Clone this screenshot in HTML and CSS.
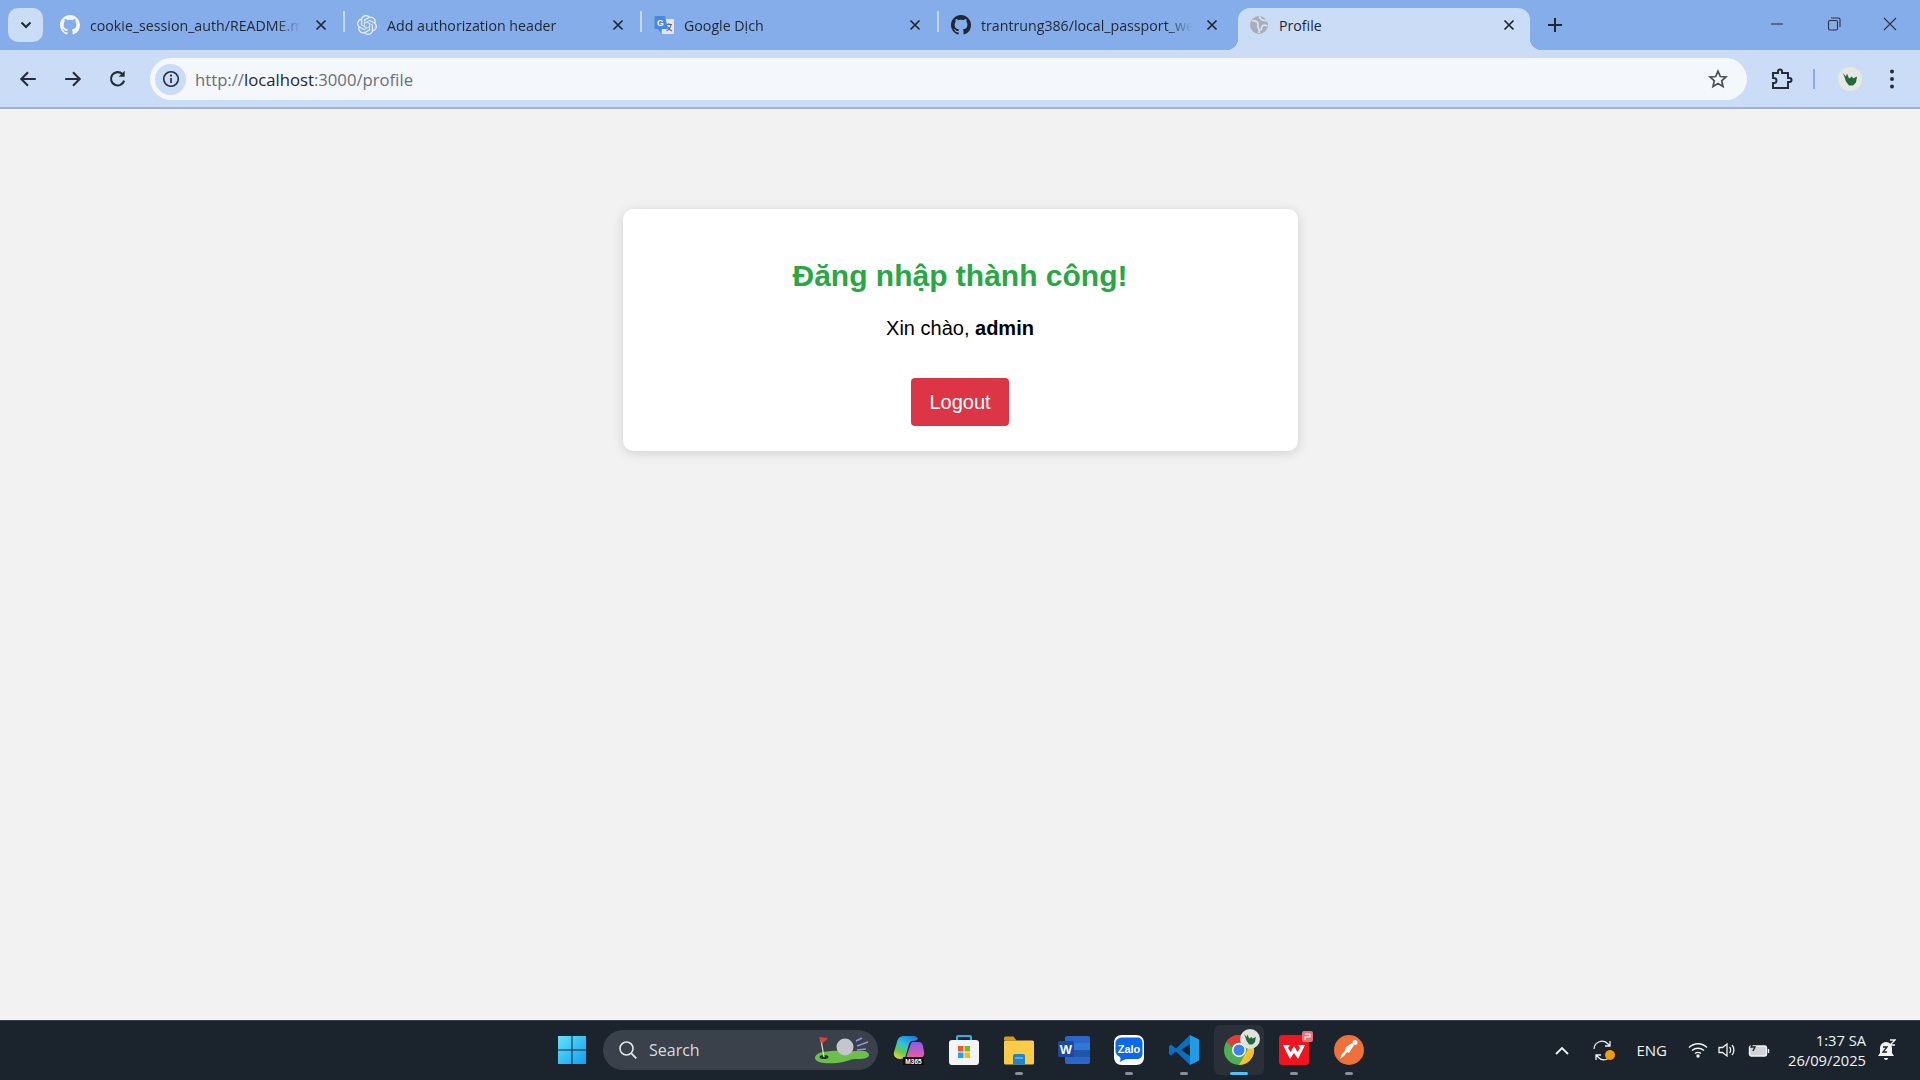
FILE: index.html
```html
<!DOCTYPE html>
<html lang="en">
<head>
    <meta charset="UTF-8">
    <title>Profile</title>
    <link rel="stylesheet" href="styles.css">
</head>
<body>
    <svg class="defs" width="0" height="0">
        <symbol id="github" viewBox="0 0 16 16">
            <path fill="currentColor" d="M8 0C3.58 0 0 3.58 0 8c0 3.54 2.29 6.53 5.47 7.59.4.07.55-.17.55-.38 0-.19-.01-.82-.01-1.49-2.01.37-2.53-.49-2.69-.94-.09-.23-.48-.94-.82-1.13-.28-.15-.68-.52-.01-.53.63-.01 1.08.58 1.23.82.72 1.21 1.87.87 2.33.66.07-.52.28-.87.51-1.07-1.78-.2-3.64-.89-3.64-3.95 0-.87.31-1.59.82-2.15-.08-.2-.36-1.02.08-2.12 0 0 .67-.21 2.2.82.64-.18 1.32-.27 2-.27.68 0 1.36.09 2 .27 1.53-1.04 2.2-.82 2.2-.82.44 1.1.16 1.92.08 2.12.51.56.82 1.27.82 2.15 0 3.07-1.87 3.75-3.65 3.95.29.25.54.73.54 1.48 0 1.07-.01 1.93-.01 2.2 0 .21.15.46.55.38A8.013 8.013 0 0016 8c0-4.42-3.58-8-8-8z"/>
        </symbol>
        <symbol id="x" viewBox="0 0 12 12">
            <path d="M1.500 1.500l9 9M10.500 1.500l-9 9" stroke="currentColor" stroke-width="1.700" fill="none"/>
        </symbol>
    </svg>

    <div class="tabstrip">
        <div class="tab-search">
            <svg width="12" height="8" viewBox="0 0 12 8"><path d="M1.500 1.500L6 6l4.500-4.500" stroke="#1f2733" stroke-width="2" fill="none"/></svg>
        </div>
        <div class="tab">
            <svg class="favicon github-light"><use href="#github"/></svg>
            <span class="tab-title">cookie_session_auth/README.m</span>
            <svg class="tab-x"><use href="#x"/></svg>
        </div>
        <div class="tab">
            <svg class="favicon" viewBox="0 0 24 24">
                <path fill="#e8eef9" d="M22.2819 9.8211a5.9847 5.9847 0 0 0-.5157-4.9108 6.0462 6.0462 0 0 0-6.5098-2.9A6.0651 6.0651 0 0 0 4.9807 4.1818a5.9847 5.9847 0 0 0-3.9977 2.9 6.0462 6.0462 0 0 0 .7427 7.0966 5.98 5.98 0 0 0 .511 4.9107 6.051 6.051 0 0 0 6.5146 2.9001A5.9847 5.9847 0 0 0 13.2599 24a6.0557 6.0557 0 0 0 5.7718-4.2058 5.9894 5.9894 0 0 0 3.9977-2.9001 6.0557 6.0557 0 0 0-.7475-7.0729zm-9.022 12.6081a4.4755 4.4755 0 0 1-2.8764-1.0408l.1419-.0804 4.7783-2.7582a.7948.7948 0 0 0 .3927-.6813v-6.7369l2.02 1.1686a.071.071 0 0 1 .038.052v5.5826a4.504 4.504 0 0 1-4.4945 4.4944zm-9.6607-4.1254a4.4708 4.4708 0 0 1-.5346-3.0137l.142.0852 4.783 2.7582a.7712.7712 0 0 0 .7806 0l5.8428-3.3685v2.3324a.0804.0804 0 0 1-.0332.0615L9.74 19.9502a4.4992 4.4992 0 0 1-6.1408-1.6464zM2.3408 7.8956a4.485 4.485 0 0 1 2.3655-1.9728V11.6a.7664.7664 0 0 0 .3879.6765l5.8144 3.3543-2.0201 1.1685a.0757.0757 0 0 1-.071 0l-4.8303-2.7865A4.504 4.504 0 0 1 2.3408 7.872zm16.5963 3.8558L13.1038 8.364 15.1192 7.2a.0757.0757 0 0 1 .071 0l4.8303 2.7913a4.4944 4.4944 0 0 1-.6765 8.1042v-5.6772a.79.79 0 0 0-.407-.667zm2.0107-3.0231l-.142-.0852-4.7735-2.7818a.7759.7759 0 0 0-.7854 0L9.409 9.2297V6.8974a.0662.0662 0 0 1 .0284-.0615l4.8303-2.7866a4.4992 4.4992 0 0 1 6.6802 4.66zM8.3065 12.863l-2.02-1.1638a.0804.0804 0 0 1-.038-.0567V6.0742a4.4992 4.4992 0 0 1 7.3757-3.4537l-.142.0805L8.704 5.459a.7948.7948 0 0 0-.3927.6813zm1.0976-2.3654l2.602-1.4998 2.6069 1.4998v2.9994l-2.5974 1.4997-2.6067-1.4997Z"/>
            </svg>
            <span class="tab-title">Add authorization header</span>
            <svg class="tab-x"><use href="#x"/></svg>
        </div>
        <div class="tab">
            <svg class="favicon" viewBox="0 0 20 20">
                <rect x="8" y="4" width="12" height="15" rx="1" fill="#e4e6e8"/>
                <path d="M11.500 9.500h6.500M14.800 8v1.500M12.500 16c2.500-1.500 4-3.500 4.500-6.500M13.500 11.500c1 2 2.500 3.500 4.500 4.500" stroke="#5f6873" stroke-width="1.100" fill="none"/>
                <path d="M1.500 1h9.500l3 13H7.500l-.5 4-3-4H1.500a1 1 0 0 1-1-1V2a1 1 0 0 1 1-1z" fill="#4a86e8"/>
                <text x="3" y="10.500" class="fav-g">G</text>
            </svg>
            <span class="tab-title">Google Dịch</span>
            <svg class="tab-x"><use href="#x"/></svg>
        </div>
        <div class="tab last">
            <svg class="favicon github-dark"><use href="#github"/></svg>
            <span class="tab-title">trantrung386/local_passport_we</span>
            <svg class="tab-x"><use href="#x"/></svg>
        </div>
        <div class="tab active">
            <svg class="favicon" viewBox="0 0 20 20">
                <circle cx="10" cy="10" r="9" fill="#a9afb8"/>
                <path d="M3 6c2-1 4 0 5.500 1.500C10 9 8 10.500 9 12c1 1.500 1.500 3.500 1 6M11 1.500c-.5 2 1 3 2.500 3.500s3.500 0 4.500 1M18 11c-2-1.500-4-1-5 .5-.5 1-1.500 2.500-.5 4" fill="none" stroke="#d5e2f6" stroke-width="1.800"/>
            </svg>
            <span class="tab-title plain">Profile</span>
            <svg class="tab-x"><use href="#x"/></svg>
        </div>
        <svg class="new-tab" width="14" height="14" viewBox="0 0 14 14"><path d="M7 0v14M0 7h14" stroke="#1f2733" stroke-width="2"/></svg>
        <div class="window-btns">
            <svg width="14" height="14" viewBox="0 0 14 14"><path d="M1 7h12" stroke="#2a3344" stroke-width="1.100"/></svg>
            <svg width="14" height="14" viewBox="0 0 14 14" fill="none" stroke="#2a3344" stroke-width="1.100"><rect x="1.500" y="3.500" width="9" height="9.500" rx="1.500"/><path d="M4 1h7.500A1.500 1.500 0 0 1 13 2.500V10"/></svg>
            <svg width="14" height="14" viewBox="0 0 14 14"><path d="M1 1l12 12M13 1L1 13" stroke="#2a3344" stroke-width="1.100"/></svg>
        </div>
    </div>

    <div class="toolbar">
        <svg class="nav-icon" viewBox="0 0 18 18"><path d="M16 9H3M9 3L3 9l6 6" fill="none" stroke="#252d3a" stroke-width="1.900"/></svg>
        <svg class="nav-icon" viewBox="0 0 18 18"><path d="M2 9h13M9 3l6 6-6 6" fill="none" stroke="#252d3a" stroke-width="1.900"/></svg>
        <svg class="nav-icon" viewBox="0 0 18 18"><path d="M14.500 10.500A6 6 0 1 1 13 4.600" fill="none" stroke="#252d3a" stroke-width="1.900"/><path d="M15 1.500V7H9.500z" fill="#252d3a"/></svg>
        <div class="omnibox">
            <span class="site-info">
                <svg width="18" height="18" viewBox="0 0 18 18"><circle cx="9" cy="9" r="7.300" fill="none" stroke="#252d3a" stroke-width="1.600"/><path d="M9 8v5" stroke="#252d3a" stroke-width="1.700"/><circle cx="9" cy="5.600" r="1.100" fill="#252d3a"/></svg>
            </span>
            <span class="url"><span class="dim">http://</span>localhost<span class="dim">:3000/profile</span></span>
            <svg class="star" width="20" height="20" viewBox="0 0 20 20"><path d="M10 2.200l2.300 5.300 5.700.5-4.300 3.800 1.300 5.600-5-3-5 3 1.300-5.600L2 8l5.700-.5z" fill="none" stroke="#4a515c" stroke-width="1.700"/></svg>
        </div>
        <svg class="ext-icon" width="24" height="24" viewBox="0 0 24 24"><path d="M4 6h5V4.500a2 2 0 0 1 4 0V6h6v5h1.500a2 2 0 0 1 0 4H19v6H4v-5h1a2.500 2.500 0 0 0 0-5H4z" fill="none" stroke="#252d3a" stroke-width="2"/></svg>
        <span class="tool-sep"></span>
        <span class="avatar">
            <svg width="24" height="24" viewBox="0 0 24 24"><circle cx="12" cy="12" r="12" fill="#e6e8e4"/><path d="M5 6l3 3.500 1-3 2 5 3-2 1 2 4-2-1 6-3 3-4 0-3-4z" fill="#22693c"/></svg>
        </span>
        <svg class="menu-icon" width="6" height="22" viewBox="0 0 6 22"><circle cx="3" cy="3.500" r="2" fill="#252d3a"/><circle cx="3" cy="11" r="2" fill="#252d3a"/><circle cx="3" cy="18.500" r="2" fill="#252d3a"/></svg>
    </div>

    <main class="page">
        <div class="card">
            <h2 class="card-title">Đăng nhập thành công!</h2>
            <p class="greeting">Xin chào, <strong>admin</strong></p>
            <button class="logout">Logout</button>
        </div>
    </main>

    <footer class="taskbar">
        <div class="task-apps">
            <div class="app">
                <svg width="30" height="30" viewBox="0 0 30 30">
                    <defs><linearGradient id="win" x1="0" y1="0" x2="1" y2="1"><stop offset="0" stop-color="#62e3fb"/><stop offset="1" stop-color="#0f9ff0"/></linearGradient></defs>
                    <path d="M1 1h13.500v13.500H1zM15.500 1H29v13.500H15.500zM1 15.500h13.500V29H1zM15.500 15.500H29V29H15.500z" fill="url(#win)"/>
                </svg>
            </div>
            <div class="search">
                <svg width="20" height="20" viewBox="0 0 20 20"><circle cx="8.500" cy="8.500" r="6.500" fill="none" stroke="#e4e7ea" stroke-width="1.600"/><path d="M13.300 13.300l5 5" stroke="#e4e7ea" stroke-width="1.800"/></svg>
                <span class="search-text">Search</span>
                <svg class="golf" width="56" height="28" viewBox="0 0 56 28">
                    <path d="M1 21c3-6 10-5 16-6 8-1 14 1 24 0 8-1 14 0 14 4s-8 4-14 4c-5 0-8 3-18 4C12 28 0 27 1 21z" fill="#6cc04a"/>
                    <ellipse cx="10" cy="21" rx="4.500" ry="2" fill="#1f3b2a"/>
                    <path d="M10 21L7 4" stroke="#e9e2d4" stroke-width="1.200"/>
                    <path d="M5 1l9 1-6 6z" fill="#ea3a3a"/>
                    <circle cx="31" cy="11" r="8.500" fill="#c3c6cd"/>
                    <path d="M42 5l6-3M43 10l11-4M43 14l9-1" stroke="#8f93e6" stroke-width="1.600"/>
                </svg>
            </div>
            <div class="app">
                <svg width="32" height="32" viewBox="0 0 32 32">
                    <defs>
                        <linearGradient id="m365a" x1="0.700" y1="0" x2="0.200" y2="1"><stop offset="0" stop-color="#1f7fe8"/><stop offset=".4" stop-color="#2fc4d8"/><stop offset=".7" stop-color="#63c94f"/><stop offset="1" stop-color="#e8d02f"/></linearGradient>
                        <linearGradient id="m365b" x1="0.500" y1="0" x2="0.500" y2="1"><stop offset="0" stop-color="#8a5be8"/><stop offset="1" stop-color="#f05aa6"/></linearGradient>
                    </defs>
                    <path d="M11 2h10c2 0 3 1 4 3l-3 2c-3-1-5 0-6 3l-3 11c-1 3-3 4-6 4-4 0-7-3-6-7L4 8c1-4 3-6 7-6z" fill="url(#m365a)"/>
                    <path d="M20 8h6c2 0 3 1 4 4l1 6c1 4-2 6-5 6H13l4-12c.500-2 1.500-4 3-4z" fill="url(#m365b)"/>
                    <rect x="10" y="23" width="21" height="8" fill="#0d0d0d"/>
                    <text x="20.500" y="29.500" class="m365-label">M365</text>
                </svg>
            </div>
            <div class="app">
                <svg width="32" height="32" viewBox="0 0 32 32">
                    <path d="M9 7V3a1 1 0 0 1 1-1h12a1 1 0 0 1 1 1v4" fill="none" stroke="#27b4ea" stroke-width="2"/>
                    <rect x="1" y="6" width="30" height="25" rx="3" fill="#f3f4f5"/>
                    <path d="M10 12h5.500v5.500H10z" fill="#ef5a29"/><path d="M16.500 12H22v5.500h-5.500z" fill="#7bb927"/><path d="M10 18.500h5.500V24H10z" fill="#17a6ef"/><path d="M16.500 18.500H22V24h-5.500z" fill="#fcb80f"/>
                </svg>
            </div>
            <div class="app running">
                <svg width="32" height="30" viewBox="0 0 32 30">
                    <path d="M1 3a1.500 1.500 0 0 1 1.500-1.500h8l3 4H1z" fill="#d79a14"/>
                    <rect x="1" y="5.500" width="30" height="24" rx="1.500" fill="#fbcd46"/>
                    <path d="M10 21a2 2 0 0 1 2-2h8a2 2 0 0 1 2 2v8.500H10z" fill="#1f84c9"/>
                    <path d="M12 23h8" stroke="#6fc6ef" stroke-width="1.400"/>
                </svg>
            </div>
            <div class="app">
                <svg width="32" height="30" viewBox="0 0 32 30">
                    <rect x="7" y="1" width="25" height="28" rx="2" fill="#2b66c8"/>
                    <path d="M7 8h25v7H7z" fill="#2c7ad6"/><path d="M7 15h25v7H7z" fill="#1f55ad"/>
                    <rect x="0" y="6" width="16" height="16" rx="1.500" fill="#1a4aa6"/>
                    <text x="8" y="18.500" class="word-w">W</text>
                </svg>
            </div>
            <div class="app running">
                <svg width="32" height="32" viewBox="0 0 32 32">
                    <path d="M9 1h14c5 0 8 3 8 8v14c0 5-3 8-8 8H9c-5 0-8-3-8-8V9c0-5 3-8 8-8z" fill="#fff"/>
                    <path d="M10 3.500h14c3.500 0 5.500 2 5.500 5.500v10c0 4-2.500 6-5.500 6H14c-3 0-5 2.500-7.500 3 1-1.500 1.500-3.500.5-5-2.500-1-4.500-3-4.500-6V9c0-3.500 3.500-5.500 7.500-5.500z" fill="#0a68ec"/>
                    <text x="16" y="19" class="zalo-label">Zalo</text>
                </svg>
            </div>
            <div class="app running">
                <svg width="32" height="32" viewBox="0 0 32 32">
                    <path d="M22 1l9 4.500v21L22 31z" fill="#1f9ce6"/>
                    <path d="M22 1L8 14.500 3 10.500 1 12v8l2 1.500 5-4L22 31v-9l-9-6 9-6z" fill="#0a6fc0"/>
                </svg>
            </div>
            <div class="app current">
                <svg width="32" height="32" viewBox="0 0 32 32">
                    <circle cx="16" cy="16" r="15" fill="#4caf50"/>
                    <path d="M16 1a15 15 0 0 1 13 7.500H16a7.500 7.500 0 0 0-7 5L3.500 7.500A15 15 0 0 1 16 1z" fill="#e53935"/>
                    <path d="M29 8.500A15 15 0 0 1 16 31l6.500-11.500A7.500 7.500 0 0 0 22 8.500z" fill="#fbc02d"/>
                    <circle cx="16" cy="16" r="7" fill="#fff"/>
                    <circle cx="16" cy="16" r="5.500" fill="#3b82f0"/>
                </svg>
                <svg class="chrome-badge" width="20" height="20" viewBox="0 0 24 24"><circle cx="12" cy="12" r="12" fill="#dfe3dd"/><path d="M5 6l3 3.500 1-3 2 5 3-2 1 2 4-2-1 6-3 3-4 0-3-4z" fill="#22693c"/></svg>
            </div>
            <div class="app running">
                <svg width="32" height="32" viewBox="0 0 32 32">
                    <rect x="1" y="1" width="30" height="30" rx="3" fill="#f0141e"/>
                    <path d="M5 11h7l-2 3 2.500 4L16 12l3.500 6L22 14l-2-3h7l-7 14-4-6-4 6z" fill="#fff"/>
                </svg>
                <span class="wps-badge">
                    <svg width="11" height="11" viewBox="0 0 11 11"><path d="M3 3h5v3H3v3" fill="none" stroke="#fff" stroke-width="1.200"/></svg>
                </span>
            </div>
            <div class="app running">
                <svg width="32" height="32" viewBox="0 0 32 32">
                    <circle cx="16" cy="16" r="15" fill="#f0703a"/>
                    <path d="M7 25l4-3 3-4 2 1 5-8-2-2-6 4-1 4-3 3z" fill="#fff"/>
                    <circle cx="22" cy="8.500" r="2.500" fill="#fff"/>
                </svg>
            </div>
        </div>

        <div class="tray">
            <svg class="tray-chevron" width="14" height="9" viewBox="0 0 14 9"><path d="M1 8l6-6 6 6" fill="none" stroke="#f1f3f4" stroke-width="1.800"/></svg>
            <span class="sync">
                <svg width="22" height="22" viewBox="0 0 22 22" fill="none" stroke="#f1f3f4" stroke-width="1.300"><path d="M2 10a8 8 0 0 1 14-5l2 2M18 2v5h-5M20 13a8 8 0 0 1-14 5l-2-2M4 21v-5h5"/></svg>
                <span class="sync-dot"></span>
            </span>
            <span class="lang">ENG</span>
            <div class="tray-icons">
                <svg width="20" height="16" viewBox="0 0 20 16" fill="none" stroke="#f1f3f4" stroke-width="1.400"><path d="M1 5.500c5-5 13-5 18 0M4 8.500c3.500-3 8.500-3 12 0M7 11.500c2-1.500 4-1.500 6 0"/><circle cx="10" cy="14" r="1" fill="#f1f3f4"/></svg>
                <svg width="20" height="16" viewBox="0 0 20 16" fill="none" stroke="#f1f3f4" stroke-width="1.300"><path d="M1 5.500h3.500L9 2v12l-4.500-3.500H1zM11.500 5c1.500 1.500 1.500 4.500 0 6M14 3c2.500 2.500 2.500 7.500 0 10"/></svg>
                <svg width="22" height="16" viewBox="0 0 22 16" fill="none" stroke="#f1f3f4" stroke-width="1.400"><rect x="1.500" y="4" width="17" height="10" rx="2" fill="#f1f3f4" fill-opacity=".85"/><path d="M20.500 7v4"/><path d="M5 1L3 5h4l-2 4" stroke="#1c2127"/></svg>
            </div>
            <div class="clock">
                <span>1:37 SA</span>
                <span>26/09/2025</span>
            </div>
            <svg class="bell" width="20" height="22" viewBox="0 0 20 22"><path d="M10 3a6 6 0 0 0-6 6v5l-2 3h16l-2-3V9a6 6 0 0 0-6-6z" fill="#f1f3f4"/><path d="M8 19a2 2 0 0 0 4 0z" fill="#f1f3f4"/><path d="M7 8h4l-4 5h4" stroke="#1c2127" stroke-width="1.300" fill="none"/><path d="M14 1h5l-5 5h5" stroke="#f1f3f4" stroke-width="1.300" fill="none"/></svg>
        </div>
    </footer>
</body>
</html>
```

FILE: styles.css
```css
* {
    box-sizing: border-box;
}

body {
    margin: 0;
    display: flex;
    flex-direction: column;
    height: 100vh;
    overflow: hidden;
    font-family: "Liberation Sans", Arial, sans-serif;
    background-color: #f2f2f2;
}

.defs {
    position: absolute;
}

/* tab strip */

.tabstrip {
    height: 50px;
    flex-shrink: 0;
    display: flex;
    align-items: flex-start;
    padding: 8px 0 0 8px;
    background-color: #85ade9;
    font-family: "Open Sans", sans-serif;
    color: #1f2733;
}

.tab-search {
    width: 35px;
    height: 34px;
    margin-right: 5px;
    display: flex;
    justify-content: center;
    align-items: center;
    border-radius: 10px;
    background-color: #cbdcf6;
}

.tab {
    width: 297px;
    height: 42px;
    flex-shrink: 0;
    padding: 0 18px 8px 12px;
    display: flex;
    align-items: center;
    position: relative;
    font-size: 14.2px;
}

.tab::after {
    content: "";
    position: absolute;
    right: 0;
    top: 3px;
    height: 21px;
    width: 2px;
    background-color: #c6d7f2;
}

.tab.last::after {
    display: none;
}

.tab.active {
    width: 292px;
    margin-left: 2px;
    padding-left: 11px;
    padding-right: 15px;
    border-radius: 12px 12px 0 0;
    background-color: #cbdcf6;
}

/* the curved feet at the bottom of the active tab */
.tab.active::before,
.tab.active::after {
    content: "";
    position: absolute;
    top: auto;
    bottom: 0;
    width: 12px;
    height: 12px;
    background-color: transparent;
}

.tab.active::before {
    left: -12px;
    background-image: radial-gradient(circle at 0 0, transparent 12px, #cbdcf6 12.5px);
}

.tab.active::after {
    right: -12px;
    background-image: radial-gradient(circle at 100% 0, transparent 12px, #cbdcf6 12.5px);
}

.favicon {
    width: 20px;
    height: 20px;
    flex-shrink: 0;
    margin-right: 10px;
}

.github-light {
    color: #f2f6fd;
}

.github-dark {
    color: #1f2733;
}

.fav-g {
    font-family: "Liberation Sans", sans-serif;
    font-size: 8.5px;
    font-weight: bold;
    fill: #fff;
}

.tab-title {
    flex: 1;
    min-width: 0;
    white-space: nowrap;
    -webkit-mask-image: linear-gradient(to right, #000 88%, transparent 100%);
    mask-image: linear-gradient(to right, #000 88%, transparent 100%);
}

.tab-title.plain {
    -webkit-mask-image: none;
    mask-image: none;
}

.tab-x {
    width: 12px;
    height: 12px;
    flex-shrink: 0;
    margin-left: 14px;
}

.new-tab {
    margin: 10px 0 0 18px;
}

.window-btns {
    margin-left: auto;
    margin-top: 3px;
    height: 26px;
    display: flex;
    align-items: center;
    gap: 42.5px;
    padding-right: 23px;
}

/* toolbar */

.toolbar {
    height: 59px;
    flex-shrink: 0;
    display: flex;
    align-items: center;
    padding: 1px 0 0 18px;
    background-color: #cbdcf6;
    border-bottom: 2px solid #a3b1cc;
}

.nav-icon {
    width: 20px;
    height: 20px;
    margin-right: 25px;
}

.omnibox {
    width: 1597px;
    height: 42px;
    margin-left: -3px;
    display: flex;
    align-items: center;
    padding: 0 19px 0 5px;
    border-radius: 21px;
    background-color: #f4f7fc;
}

.site-info {
    width: 31px;
    height: 31px;
    margin-right: 9px;
    display: flex;
    justify-content: center;
    align-items: center;
    border-radius: 50%;
    background-color: #cbdcf6;
}

.url {
    flex: 1;
    font-family: "Open Sans", sans-serif;
    font-size: 16.7px;
    color: #1f2733;
}

.dim {
    color: #6a6f76;
}

.ext-icon {
    margin-left: 22px;
}

.tool-sep {
    width: 2px;
    height: 20px;
    margin-left: 20px;
    background-color: #85ade9;
}

.avatar {
    width: 24px;
    height: 24px;
    margin-left: 23px;
    display: flex;
}

.menu-icon {
    margin-left: 27px;
}

/* page */

.page {
    flex: 1;
    display: flex;
    justify-content: center;
    align-items: flex-start;
    padding-top: 100px;
}

.card {
    width: 675px;
    height: 242px;
    padding: 50px;
    text-align: center;
    border-radius: 10px;
    background-color: #fff;
    box-shadow: 0 2px 12px rgba(0, 0, 0, 0.14);
}

.card-title {
    margin: 0;
    font-size: 30px;
    line-height: 34px;
    font-weight: bold;
    color: #28a745;
}

.greeting {
    margin: 24px 0 0;
    font-size: 20px;
    line-height: 23px;
    color: #000;
}

.logout {
    width: 98px;
    height: 48px;
    margin-top: 38px;
    padding: 0;
    font-family: inherit;
    font-size: 20px;
    color: #fff;
    border: none;
    border-radius: 4px;
    background-color: #dc3545;
    cursor: pointer;
}

/* taskbar */

.taskbar {
    height: 60px;
    flex-shrink: 0;
    display: flex;
    align-items: center;
    padding: 0 0 1px 547px;
    background-color: #1b232c;
    border-top: 1px solid #3a3f46;
    font-family: "Open Sans", sans-serif;
    color: #f1f3f4;
}

.task-apps {
    display: flex;
    align-items: center;
    gap: 5px;
}

.app {
    width: 50px;
    height: 50px;
    display: flex;
    justify-content: center;
    align-items: center;
    position: relative;
    border-radius: 6px;
}

.app.running::after,
.app.current::after {
    content: "";
    position: absolute;
    left: 50%;
    bottom: 0;
    width: 8px;
    height: 3px;
    margin-left: -4px;
    border-radius: 2px;
    background-color: #8b9096;
}

.app.current {
    background-color: #2a3038;
}

.app.current::after {
    width: 18px;
    margin-left: -9px;
    background-color: #4cc2ff;
}

.chrome-badge {
    position: absolute;
    top: 4px;
    right: 4px;
}

.wps-badge {
    position: absolute;
    top: 6px;
    right: 6px;
    width: 11px;
    height: 11px;
    display: flex;
    border-radius: 2px;
    background-color: #e8707a;
}

.m365-label {
    font-family: "Liberation Sans", sans-serif;
    font-size: 6.5px;
    font-weight: bold;
    text-anchor: middle;
    fill: #fff;
}

.word-w {
    font-family: "Liberation Sans", sans-serif;
    font-size: 13px;
    font-weight: bold;
    text-anchor: middle;
    fill: #fff;
}

.zalo-label {
    font-family: "Liberation Sans", sans-serif;
    font-size: 11px;
    font-weight: bold;
    text-anchor: middle;
    fill: #fff;
}

.search {
    width: 275px;
    height: 40px;
    margin: 0 1px;
    display: flex;
    align-items: center;
    padding: 0 8px 0 15px;
    border-radius: 20px;
    background-color: #3a414a;
}

.search-text {
    flex: 1;
    margin-left: 11px;
    font-size: 16px;
    color: #d7dade;
}

.tray {
    margin-left: auto;
    height: 100%;
    display: flex;
    align-items: center;
    padding-right: 24px;
}

.tray-chevron {
    margin-right: 23px;
}

.sync {
    position: relative;
    display: flex;
}

.sync-dot {
    position: absolute;
    right: -1px;
    bottom: 1px;
    width: 10px;
    height: 10px;
    border-radius: 50%;
    background-color: #f39c12;
}

.lang {
    margin-left: 22px;
    font-size: 15px;
}

.tray-icons {
    display: flex;
    align-items: center;
    gap: 10px;
    margin-left: 21px;
}

.clock {
    width: 96px;
    display: flex;
    flex-direction: column;
    align-items: flex-end;
    font-size: 14.7px;
    line-height: 20px;
}

.bell {
    margin-left: 10px;
}
```
